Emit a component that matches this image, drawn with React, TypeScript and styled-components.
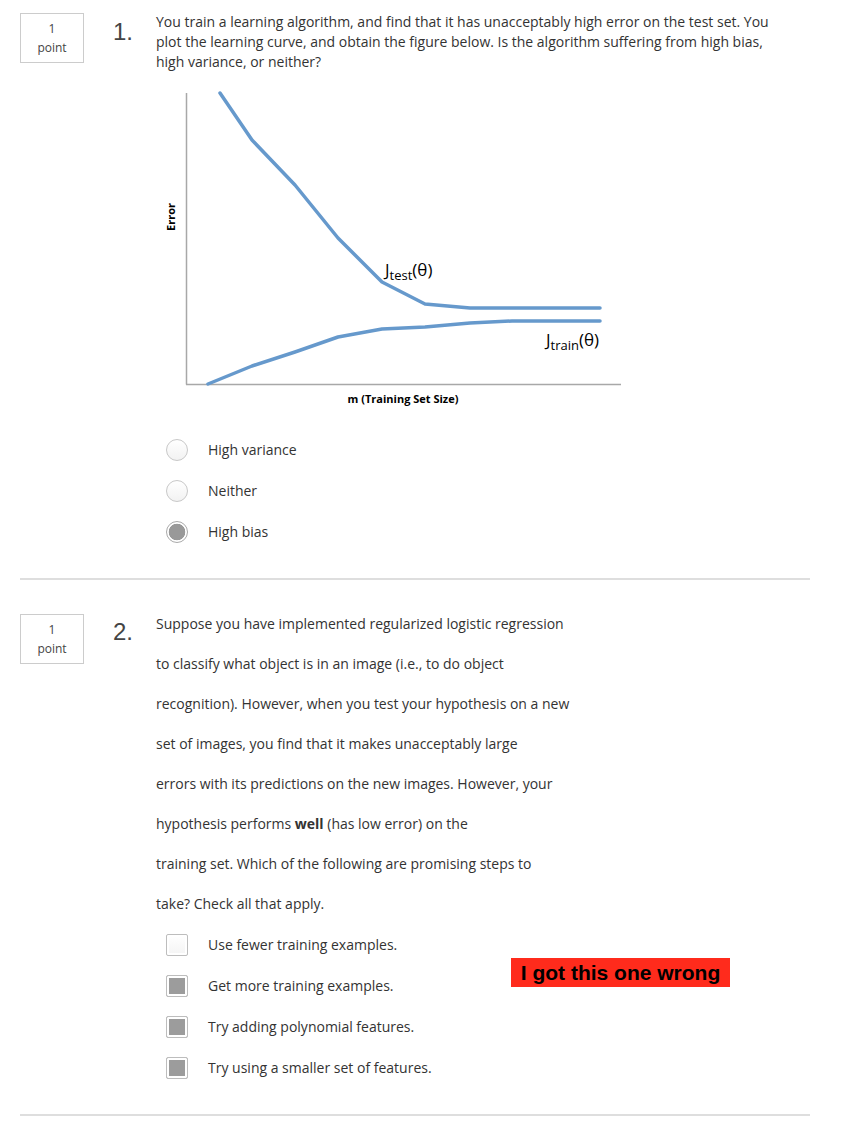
import styled, { createGlobalStyle } from "styled-components";

const GlobalStyle = createGlobalStyle`
  body {
    margin: 0;
    background: #fff;
    font-family: "Open Sans", "Liberation Sans", sans-serif;
    color: #333;
  }
`;

const Page = styled.div`
  width: 845px;
  padding-top: 12px;
`;

const Question = styled.div<{ $padBottom: number }>`
  position: relative;
  display: flex;
  align-items: flex-start;
  padding-bottom: ${p => p.$padBottom}px;
`;

const PointBox = styled.div<{ $top: number }>`
  box-sizing: border-box;
  margin-left: 20px;
  margin-top: ${p => p.$top}px;
  width: 64px;
  height: 50px;
  border: 1px solid #ccc;
  display: flex;
  flex-direction: column;
  align-items: center;
  justify-content: center;
  font-size: 12px;
  line-height: 19px;
  color: #444;
`;

const Number = styled.div<{ $top: number }>`
  width: 43px;
  margin-left: 29px;
  margin-top: ${p => p.$top}px;
  font-family: "Liberation Sans", Arial, sans-serif;
  font-size: 24px;
  line-height: 24px;
  color: #444;
`;

const Body = styled.div`
  flex: 1;
`;

const Prompt = styled.div<{ $lh: number }>`
  font-size: 14px;
  line-height: ${p => p.$lh}px;
  color: #333;
  span {
    display: block;
    white-space: nowrap;
  }
  b {
    font-weight: 700;
  }
`;

const Figure = styled.svg`
  display: block;
  margin-top: 8px;
`;

const Options = styled.div<{ $top: number }>`
  margin-top: ${p => p.$top}px;
  margin-left: 10px;
`;

const Option = styled.div`
  display: flex;
  align-items: center;
  height: 41px;
  font-size: 14px;
  color: #333;
`;

const Radio = styled.span<{ $on?: boolean }>`
  box-sizing: border-box;
  width: 22px;
  height: 22px;
  border-radius: 50%;
  border: 1px solid ${p => (p.$on ? "#aaa" : "#c8c8c8")};
  background: ${p =>
    p.$on
      ? "radial-gradient(circle, #999 0, #999 8px, #fff 8.6px)"
      : "linear-gradient(#fff, #f2f2f2)"};
  margin-right: 20px;
`;

const Check = styled.span<{ $on?: boolean }>`
  box-sizing: border-box;
  width: 22px;
  height: 22px;
  border-radius: 2px;
  border: 1px solid #bdbdbd;
  background: ${p => (p.$on ? "#9c9c9c" : "linear-gradient(#fff, #f4f4f4)")};
  box-shadow: inset 0 0 0 2px #fff;
  margin-right: 20px;
`;

const Rule = styled.hr`
  margin: 0 35px 0 20px;
  border: 0;
  height: 2px;
  background: #dedede;
`;

const Wrong = styled.div`
  position: absolute;
  left: 511px;
  top: 354px;
  width: 219px;
  height: 29px;
  background: #ff2b1c;
  color: #000;
  font-family: "Liberation Sans", Arial, sans-serif;
  font-weight: 700;
  font-size: 21px;
  line-height: 29px;
  text-align: center;
`;

const blue = "#6699cc";
const testCurve = "64,13 96,60 139,105 182,158 226,202 269,224 314,228 444,228";
const trainCurve = "52,304 96,286 139,272 182,257 226,249 269,247 314,243 356,241 444,241";

const LearningCurve = () => (
  <Figure width="480" height="340" viewBox="0 0 480 340">
    <line x1="30.5" y1="13" x2="30.5" y2="304.5" stroke="#a8a8a8" strokeWidth="1.5" />
    <line x1="30" y1="304.5" x2="465" y2="304.5" stroke="#a8a8a8" strokeWidth="1.5" />
    <polyline points={testCurve} fill="none" stroke={blue} strokeWidth="3.5" strokeLinejoin="round" strokeLinecap="round" />
    <polyline points={trainCurve} fill="none" stroke={blue} strokeWidth="3.5" strokeLinejoin="round" strokeLinecap="round" />
    <text x="229" y="196" fontFamily="Open Sans, sans-serif" fontSize="17" fill="#000">
      J<tspan fontSize="13" dy="4">test</tspan><tspan fontSize="17" dy="-4">(θ)</tspan>
    </text>
    <text x="390" y="266" fontFamily="Open Sans, sans-serif" fontSize="17" fill="#000">
      J<tspan fontSize="13" dy="4">train</tspan><tspan fontSize="17" dy="-4">(θ)</tspan>
    </text>
    <text
      x="16"
      y="137"
      transform="rotate(-90 16 137)"
      textAnchor="middle"
      dominantBaseline="middle"
      fontFamily="Open Sans, sans-serif"
      fontWeight="700"
      fontSize="11"
      fill="#000"
    >
      Error
    </text>
    <text x="247" y="323" textAnchor="middle" fontFamily="Open Sans, sans-serif" fontWeight="700" fontSize="11" fill="#000">
      m (Training Set Size)
    </text>
  </Figure>
);

export default function App() {
  return (
    <Page>
      <GlobalStyle />
      <Question $padBottom={26}>
        <PointBox $top={1}>
          <span>1</span>
          <span>point</span>
        </PointBox>
        <Number $top={8}>1.</Number>
        <Body>
          <Prompt $lh={20}>
            <span>You train a learning algorithm, and find that it has unacceptably high error on the test set. You</span>
            <span>plot the learning curve, and obtain the figure below. Is the algorithm suffering from high bias,</span>
            <span>high variance, or neither?</span>
          </Prompt>
          <LearningCurve />
          <Options $top={9}>
            <Option><Radio />High variance</Option>
            <Option><Radio />Neither</Option>
            <Option><Radio $on />High bias</Option>
          </Options>
        </Body>
      </Question>
      <Rule />
      <Question $padBottom={26} style={{ marginTop: 24 }}>
        <PointBox $top={10}>
          <span>1</span>
          <span>point</span>
        </PointBox>
        <Number $top={16}>2.</Number>
        <Body>
          <Prompt $lh={40}>
            <span>Suppose you have implemented regularized logistic regression</span>
            <span>to classify what object is in an image (i.e., to do object</span>
            <span>recognition). However, when you test your hypothesis on a new</span>
            <span>set of images, you find that it makes unacceptably large</span>
            <span>errors with its predictions on the new images. However, your</span>
            <span>hypothesis performs <b>well</b> (has low error) on the</span>
            <span>training set. Which of the following are promising steps to</span>
            <span>take? Check all that apply.</span>
          </Prompt>
          <Options $top={0}>
            <Option><Check />Use fewer training examples.</Option>
            <Option><Check $on />Get more training examples.</Option>
            <Option><Check $on />Try adding polynomial features.</Option>
            <Option><Check $on />Try using a smaller set of features.</Option>
          </Options>
        </Body>
        <Wrong>I got this one wrong</Wrong>
      </Question>
      <Rule />
    </Page>
  );
}
